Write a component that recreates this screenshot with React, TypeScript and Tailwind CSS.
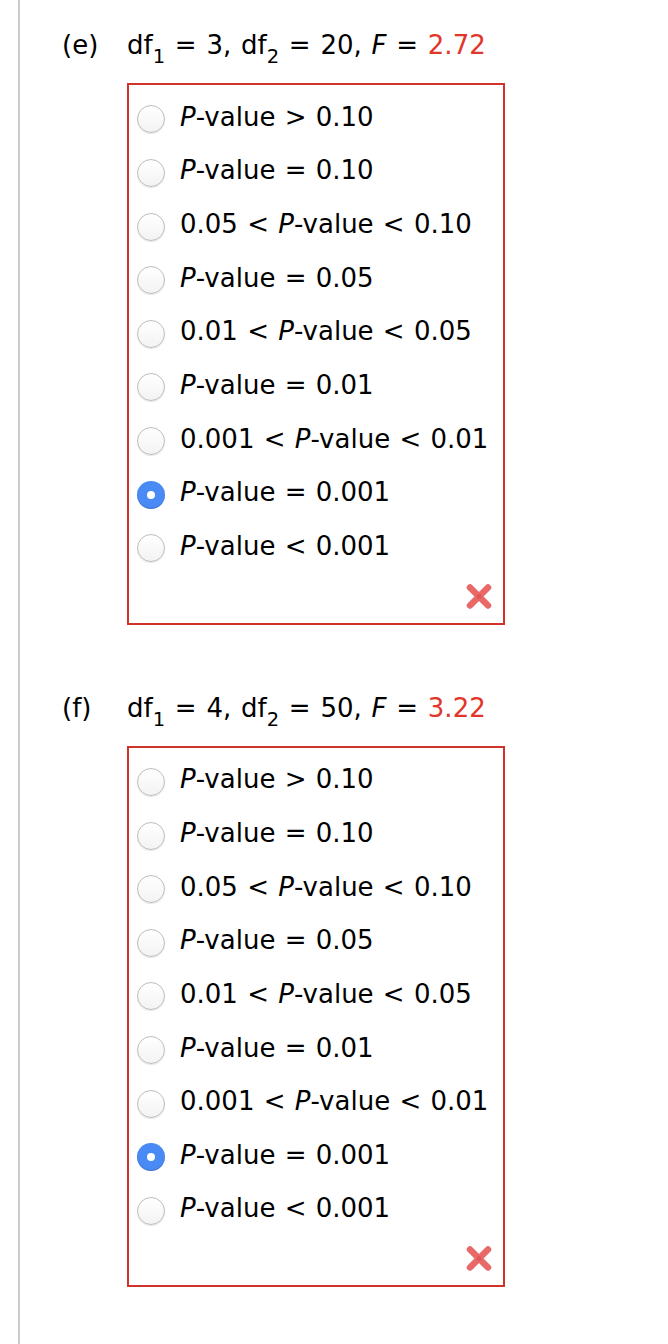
import React from "react";

type Opt = React.ReactNode;

const P = () => <i>P</i>;

const options: Opt[] = [
  <><P />-value &gt; 0.10</>,
  <><P />-value = 0.10</>,
  <>0.05 &lt; <P />-value &lt; 0.10</>,
  <><P />-value = 0.05</>,
  <>0.01 &lt; <P />-value &lt; 0.05</>,
  <><P />-value = 0.01</>,
  <>0.001 &lt; <P />-value &lt; 0.01</>,
  <><P />-value = 0.001</>,
  <><P />-value &lt; 0.001</>,
];

function Radio({ checked }: { checked: boolean }) {
  if (checked) {
    return (
      <span className="relative top-[2px] flex h-[28px] w-[28px] shrink-0 items-center justify-center rounded-full bg-[#4a8af4] shadow-[inset_0_-1px_1px_rgba(0,0,0,0.18)]">
        <span className="h-[8px] w-[8px] rounded-full bg-white" />
      </span>
    );
  }
  return (
    <span className="relative top-[2px] block h-[28px] w-[28px] shrink-0 rounded-full border border-[#bdbdbd] bg-gradient-to-b from-white to-[#f3f3f3] shadow-[0_1px_1px_rgba(0,0,0,0.1)]" />
  );
}

function XIcon() {
  return (
    <svg width="28" height="27" viewBox="0 0 28 27">
      <g strokeLinecap="round" stroke="#e86262" strokeWidth="6.5" opacity="0.95">
        <line x1="5" y1="4.5" x2="23" y2="22.5" />
        <line x1="23" y1="4.5" x2="5" y2="22.5" />
      </g>
      <circle cx="14" cy="13.5" r="2.5" fill="#d94848" opacity="0.5" />
    </svg>
  );
}

function Sub({ children }: { children: React.ReactNode }) {
  return <span className="relative top-[9px] text-[0.75em]">{children}</span>;
}

function Section({
  label,
  df1,
  df2,
  f,
  className,
}: {
  label: string;
  df1: string;
  df2: string;
  f: string;
  className?: string;
}) {
  return (
    <div className={"flex " + (className ?? "")}>
      <div className="ml-[42px] w-[65px] h-[30px] leading-[30px]">{label}</div>
      <div className="flex flex-col">
        <div className="h-[30px] leading-[30px] whitespace-nowrap [word-spacing:1.5px]">
          df<Sub>1</Sub> = {df1}, df<Sub>2</Sub> = {df2}, <i>F</i> ={" "}
          <span className="text-[#e2352b]">{f}</span>
        </div>
        <div className="mt-[23px] w-[378px] border-2 border-[#cf3329] pt-[5.5px] pb-[14px]">
          {options.map((o, i) => (
            <div key={i} className="flex h-[53.625px] items-center pl-[8px]">
              <Radio checked={i === 7} />
              <span className="ml-[15px] whitespace-nowrap [word-spacing:1px]">{o}</span>
            </div>
          ))}
          <div className="mt-[9.5px] flex h-[26px] justify-end pr-[10px]">
            <XIcon />
          </div>
        </div>
      </div>
    </div>
  );
}

export default function App() {
  return (
    <div
      className="min-h-[1344px] w-[668px] bg-white text-[26px] text-black"
      style={{ fontFamily: '"DejaVu Sans", Verdana, sans-serif' }}
    >
      <div className="ml-[18px] min-h-[1344px] border-l-2 border-[#cccccc] pt-[30px]">
        <Section label="(e)" df1="3" df2="20" f="2.72" />
        <Section label="(f)" df1="4" df2="50" f="3.22" className="mt-[68px]" />
      </div>
    </div>
  );
}
